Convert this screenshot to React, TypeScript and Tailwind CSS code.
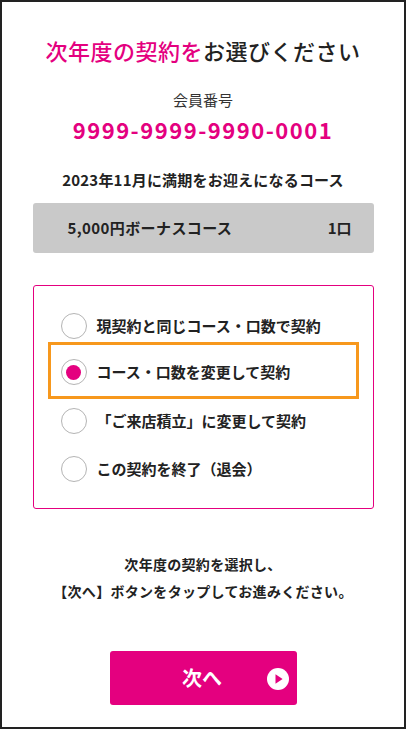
const options = [
  { label: "現契約と同じコース・口数で契約" },
  { label: "コース・口数を変更して契約" },
  { label: "「ご来店積立」に変更して契約" },
  { label: "この契約を終了（退会）" },
]

function Radio({ checked }: { checked: boolean }) {
  return (
    <span className="flex h-[26px] w-[26px] shrink-0 items-center justify-center rounded-full border border-[#b4b4b4] bg-white">
      {checked && <span className="h-[15px] w-[15px] rounded-full bg-[#e4007f]" />}
    </span>
  )
}

export default function App() {
  const selected = 1
  return (
    <div
      className="flex h-[729px] w-[406px] flex-col items-center border-2 border-[#222] bg-white text-[#222]"
      style={{ fontFamily: '"Noto Sans CJK JP", "Noto Sans", sans-serif' }}
    >
      {/* Title */}
      <h1 className="mt-[33px] text-[22px] font-medium leading-[30px] tracking-[0.5px]">
        <span className="text-[#e4007f]">次年度の契約を</span>お選びください
      </h1>

      {/* Member number */}
      <p className="mt-[25px] text-[15px] leading-[20px] text-[#333]">会員番号</p>
      <p className="mt-[5px] text-[22px] font-bold leading-[28px] tracking-[1.5px] text-[#e4007f]">
        9999-9999-9990-0001
      </p>

      {/* Current course */}
      <p className="mt-[27px] text-[15px] font-bold leading-[20px] tracking-[0.2px]">2023年11月に満期をお迎えになるコース</p>
      <div className="mt-[13px] flex h-[50px] w-[341px] items-center justify-between rounded-[3px] bg-[#c9c9c9] pl-[35px] pr-[22px] text-[15px] font-bold">
        <span className="tracking-[0.4px]">5,000円ボーナスコース</span>
        <span>1口</span>
      </div>

      {/* Options */}
      <div className="mt-[32px] flex h-[224px] w-[341px] flex-col rounded-[3px] border border-[#e4007f] px-[14px] pt-[24px]">
        {options.map((o, i) => {
          const isSel = i === selected
          const h = ["h-[32px]", "h-[57px]", "h-[44px]", "h-[52px]"][i]
          return (
            <div
              key={o.label}
              className={`flex items-center gap-[10px] border-[3px] pl-[10px] text-[15px] font-bold ${h} ${
                isSel ? "border-[#f7981d] pt-[3px]" : "border-transparent"
              }`}
            >
              <Radio checked={isSel} />
              <span>{o.label}</span>
            </div>
          )
        })}
      </div>

      {/* Guide text */}
      <p className="mt-[42px] text-center text-[14px] font-bold leading-[27px] tracking-[0.3px]">
        次年度の契約を選択し、
        <br />
        【次へ】ボタンをタップしてお進みください。
      </p>

      {/* Next button */}
      <button className="relative mt-[46px] flex h-[54px] w-[187px] items-center justify-center rounded-[3px] bg-[#e4007f] text-[20px] font-bold text-white">
        <span className="-ml-[2px]">次へ</span>
        <svg className="absolute right-[8px] top-[17px]" width="22" height="22" viewBox="0 0 22 22">
          <circle cx="11" cy="11" r="11" fill="#fff" />
          <path d="M8.5 6.2 L15.6 11 L8.5 15.8 Z" fill="#e4007f" />
        </svg>
      </button>
    </div>
  )
}
